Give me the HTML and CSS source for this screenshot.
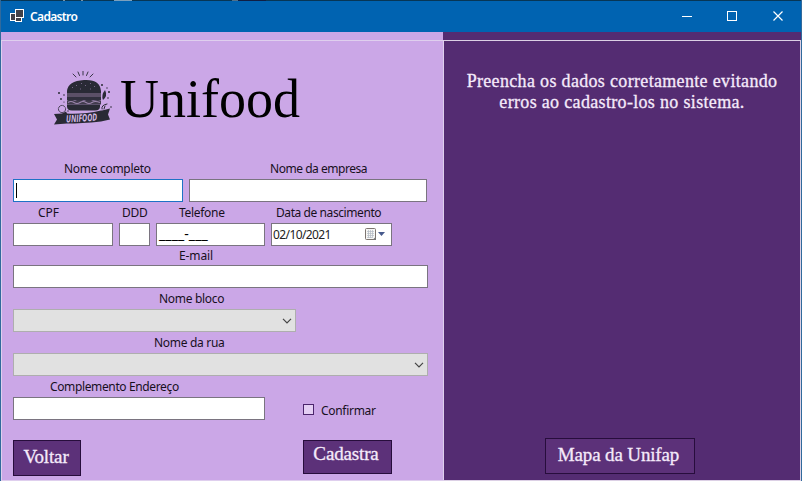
FILE: index.html
```
<!DOCTYPE html>
<html lang="pt-BR">
<head>
<meta charset="utf-8">
<title>Cadastro</title>
<link rel="stylesheet" href="styles.css">
</head>
<body>
<div class="window">
  <div class="strip"></div>
  <header class="titlebar">
    <svg class="app-icon" width="14" height="13" viewBox="0 0 14 13" shape-rendering="crispEdges"><g fill="#404048" stroke="#fff"><rect x="5.5" y="8.5" width="6" height="4"/><rect x=".5" y="4.5" width="5" height="7"/><rect x="5.5" y=".5" width="8" height="8"/></g></svg>
    <span class="title">Cadastro</span>
    <svg class="controls" width="102" height="12" viewBox="0 0 102 12" fill="none" stroke="#fff"><path d="M0 6.500h10M45.500 1.500h9v9h-9z" shape-rendering="crispEdges"/><path d="M91.500 1.500l9 9M100.500 1.500l-9 9" stroke-width="1.200"/></svg>
  </header>
  <div class="topbar"><div class="top-left"></div><div class="top-right"></div></div>
  <main class="client">
    <section class="form-panel">
      <div class="brand">
        <svg class="logo" width="60" height="56" viewBox="0 0 60 56">
          <g fill="none" stroke="#292a35" stroke-linecap="round">
            <path d="M22 6l-3-3M25.500 4.500L24 1M29 4V0M32.500 4.500L34 1M36 6l3-3" stroke-width=".9"/>
            <circle cx="8" cy="38" r="3.600" stroke-width=".8" stroke-dasharray="2 1"/>
            <path d="M48 38q-1-4 5-5M50 38l1-3" stroke-width="1"/>
          </g>
          <g fill="#292a35">
            <path d="M13 20q1-10 17-11t17 11v2H13zM13 33.500h33v2q0 4-5 4H18q-5 0-5-4z"/>
            <path d="M49 29q-2-5 2-10q3 6-2 10z"/>
            <circle cx="5" cy="22" r="1"/><circle cx="10" cy="24" r=".8"/><circle cx="7" cy="28" r=".9"/><circle cx="10" cy="31" r=".6"/>
            <circle cx="48" cy="14" r="1"/><circle cx="53" cy="17" r=".7"/><circle cx="55" cy="21" r="1"/><circle cx="54" cy="27" r=".8"/><circle cx="57" cy="36" r=".8"/><circle cx="14" cy="40" r=".7"/>
          </g>
          <path d="M13 22h34v4H13z" fill="#5b5067"/>
          <path d="M13 26h34v3l-3 1-5-1-4 2-5-2-5 2-4-2-5 2-3-2z" fill="#31303e"/>
          <path d="M13 29.500h34v4H13z" fill="#413b4d"/>
          <path d="M14 31.500q3-2 6 0t6 0 6 0 6 0 8 0" fill="none" stroke="#9c86ad" stroke-width="1.200"/>
          <path d="M18 17l1-1M22 14l1 1M27 12l1 1M31 15l1-1M36 12l1 1M40 16l1-1M26 18h1M36 18h1" stroke="#9a83ad" stroke-width=".7"/>
          <path d="M0 43l8-.5 4-2 1 2q16 1 34-3l1 0 8-2-2 6 2 5-9 2q-20 2-34 2l-13 1 3-5z" fill="#292a35"/>
          <text class="logo-text" x="12" y="50.500" textLength="31" lengthAdjust="spacingAndGlyphs" transform="rotate(-4 28 46)">UNIFOOD</text>
        </svg>
        <h1>Unifood</h1>
      </div>

      <div class="row first">
        <div class="field w-name"><label class="l-name">Nome completo</label><div class="input focused"><i class="caret"></i></div></div>
        <div class="field w-company"><label class="l-company">Nome da empresa</label><div class="input"></div></div>
      </div>
      <div class="row">
        <div class="field w-cpf"><label class="l-cpf">CPF</label><div class="input"></div></div>
        <div class="field w-ddd"><label class="l-ddd">DDD</label><div class="input"></div></div>
        <div class="field w-phone"><label class="l-phone">Telefone</label><div class="input mask">____-___</div></div>
        <div class="field w-date"><label class="l-date">Data de nascimento</label>
          <div class="input date"><span>02/10/2021</span>
            <svg width="21" height="13" viewBox="0 0 21 13"><rect x=".5" y=".5" width="10" height="11" rx="1" fill="#f7f7f5" stroke="#7d7570"/><path d="M2 3.500h7M2 5.500h7M2 7.500h7M2 9.500h5M3.500 2v8M5.500 2v8M7.500 2v8" stroke="#b3bac4" stroke-width=".7"/><path d="M7.500 12l3.500-3.500V12z" fill="#777"/><path d="M13 4h7l-3.500 4z" fill="#46598c"/></svg>
          </div></div>
      </div>
      <div class="row email"><div class="field w-full"><label class="l-email">E-mail</label><div class="input"></div></div></div>
      <div class="row"><div class="field w-block"><label class="l-block">Nome bloco</label><div class="input select"><svg width="10" height="6" viewBox="0 0 10 6"><path d="M1 .8l4 4 4-4" fill="none" stroke="#444" stroke-width="1.200"/></svg></div></div></div>
      <div class="row"><div class="field w-full"><label class="l-street">Nome da rua</label><div class="input select"><svg width="10" height="6" viewBox="0 0 10 6"><path d="M1 .8l4 4 4-4" fill="none" stroke="#444" stroke-width="1.200"/></svg></div></div></div>
      <div class="row last">
        <div class="field w-extra"><label class="l-extra">Complemento Endereço</label><div class="input"></div></div>
        <div class="check"><i class="box"></i><span class="l-confirm">Confirmar</span></div>
      </div>
      <div class="actions"><button class="btn back">Voltar</button><button class="btn save">Cadastra</button></div>
    </section>
    <aside class="info-panel">
      <p><span class="line1">Preencha os dados corretamente evitando</span><br><span class="line2">erros ao cadastro-los no sistema.</span></p>
      <button class="btn map">Mapa da Unifap</button>
    </aside>
  </main>
</div>
</body>
</html>
```
FILE: styles.css
```
* { box-sizing: border-box; }
body { margin: 0; overflow: hidden; font-family: "Noto Sans", sans-serif; }
svg { display: block; flex: none; }
.window { width: 802px; height: 481px; display: flex; flex-direction: column; border-left: 1px solid #316a9c; border-right: 1px solid #316a9c; }
.strip { height: 1px; background: linear-gradient(90deg, #073655 62px, #7893a5 62px 64px, #073655 64px 80px, #7893a5 80px 82px, #073655 82px 113px, #7ca0bd 113px 131px, #073655 131px 231px, #50718a 231px 237px, #101e43 237px 265px, #073655 265px); }
.titlebar { height: 31px; flex: none; display: flex; align-items: center; padding: 0 17px 0 9px; background: #0063b1; color: #fff; }
.app-icon { margin-top: -2px; }
.title { margin-left: 6px; font-size: 12px; font-weight: 600; line-height: 16px; letter-spacing: -0.65px; }
.controls { margin-left: auto; margin-top: -1px; }
.topbar { height: 8px; display: flex; flex: none; }
.top-left { width: 442px; background: #cba7e7; }
.top-right { flex: 1; background: #542c72; }
.client { flex: 1; display: flex; min-height: 0; }
.form-panel { width: 443px; display: flex; flex-direction: column; padding: 0 0 0 11px; background: #cba7e7; border: 1px solid #dfcfee; }
.info-panel { flex: 1; display: flex; flex-direction: column; align-items: center; background: #542c72; border: 1px solid #dcd0e5; border-left: 0; }
.brand { height: 118px; display: flex; padding: 28px 0 0 41px; }
.logo { margin-top: 2px; }
.logo-text { font: italic bold 10px "Open Sans", sans-serif; fill: #d6bde8; }
h1 { margin: 0 0 0 6px; font: 54px/60px "Liberation Serif", serif; letter-spacing: 0; color: #000; }
.row { display: flex; gap: 6px; }
.field { display: flex; flex-direction: column; flex: none; }
label, .l-confirm { font-size: 12px; line-height: 20px; color: #17101d; white-space: nowrap; letter-spacing: -0.3px; }
label { display: block; height: 21px; line-height: 22px; }
.first label { height: 20px; line-height: 20px; }
.email label { height: 19px; line-height: 19px; }
.input { height: 23px; display: flex; align-items: center; background: #fff; border: 1px solid #7a7480; }
.focused { border-color: #1e72c5; }
.caret { width: 1px; height: 15px; margin-left: 2px; background: #000; }
.mask { padding-left: 2px; font-size: 12px; line-height: 18px; color: #000; font-size: 14px; letter-spacing: 0.1px; padding-bottom: 2px; }
.date { padding: 0 5px 0 1px; font-size: 12px; letter-spacing: -0.6px; justify-content: space-between; color: #222; }
.select { background: #e1e1e1; border-color: #aeaeae; justify-content: flex-end; padding-right: 3px; }
.w-name { width: 170px; }
.w-company { width: 238px; }
.w-cpf { width: 100px; }
.w-ddd { width: 31px; }
.w-phone { width: 109px; }
.w-date { width: 121px; }
.w-full { width: 415px; }
.w-block { width: 283px; }
.w-extra { width: 252px; }
.l-name { padding-left: 51px; }
.l-company { padding-left: 81px; letter-spacing: -0.47px; }
.l-cpf { padding-left: 25px; letter-spacing: 0; }
.l-ddd { padding-left: 3px; }
.l-phone { padding-left: 23px; }
.l-date { padding-left: 5px; letter-spacing: -0.42px; }
.l-email { padding-left: 166px; letter-spacing: -0.1px; }
.l-block { padding-left: 146px; }
.l-street { padding-left: 141px; }
.l-extra { padding-left: 37px; letter-spacing: -0.37px; }
.check { display: flex; align-items: flex-start; padding: 25px 0 0 32px; }
.box { width: 11px; height: 11px; margin-top: 3px; border: 1px solid #4b256c; background: #e4cff4; }
.l-confirm { margin-left: 7px; }
.actions { display: flex; align-items: flex-start; gap: 222px; margin-top: 19px; }
.btn { padding: 0 0 3px; border: 1px solid #270d3c; border-radius: 0; background: #5c3179; color: #f5eafa; font: 19px/24px "Liberation Serif", serif; letter-spacing: -0.15px; white-space: nowrap; -webkit-text-stroke: 0.3px #f5eafa; }
.back { width: 68px; height: 36px; padding-right: 2px; }
.save { width: 89px; height: 34px; padding: 0 3px 6px 0; }
.map { width: 150px; height: 36px; padding-right: 2px; margin: auto 0 6px -5px; }
.info-panel p { margin: 30px 0 0 0; font: 18px/21px "Liberation Serif", serif; letter-spacing: 0.33px; color: #f5eafa; text-align: center; white-space: nowrap; -webkit-text-stroke: 0.3px #f5eafa; }
```
